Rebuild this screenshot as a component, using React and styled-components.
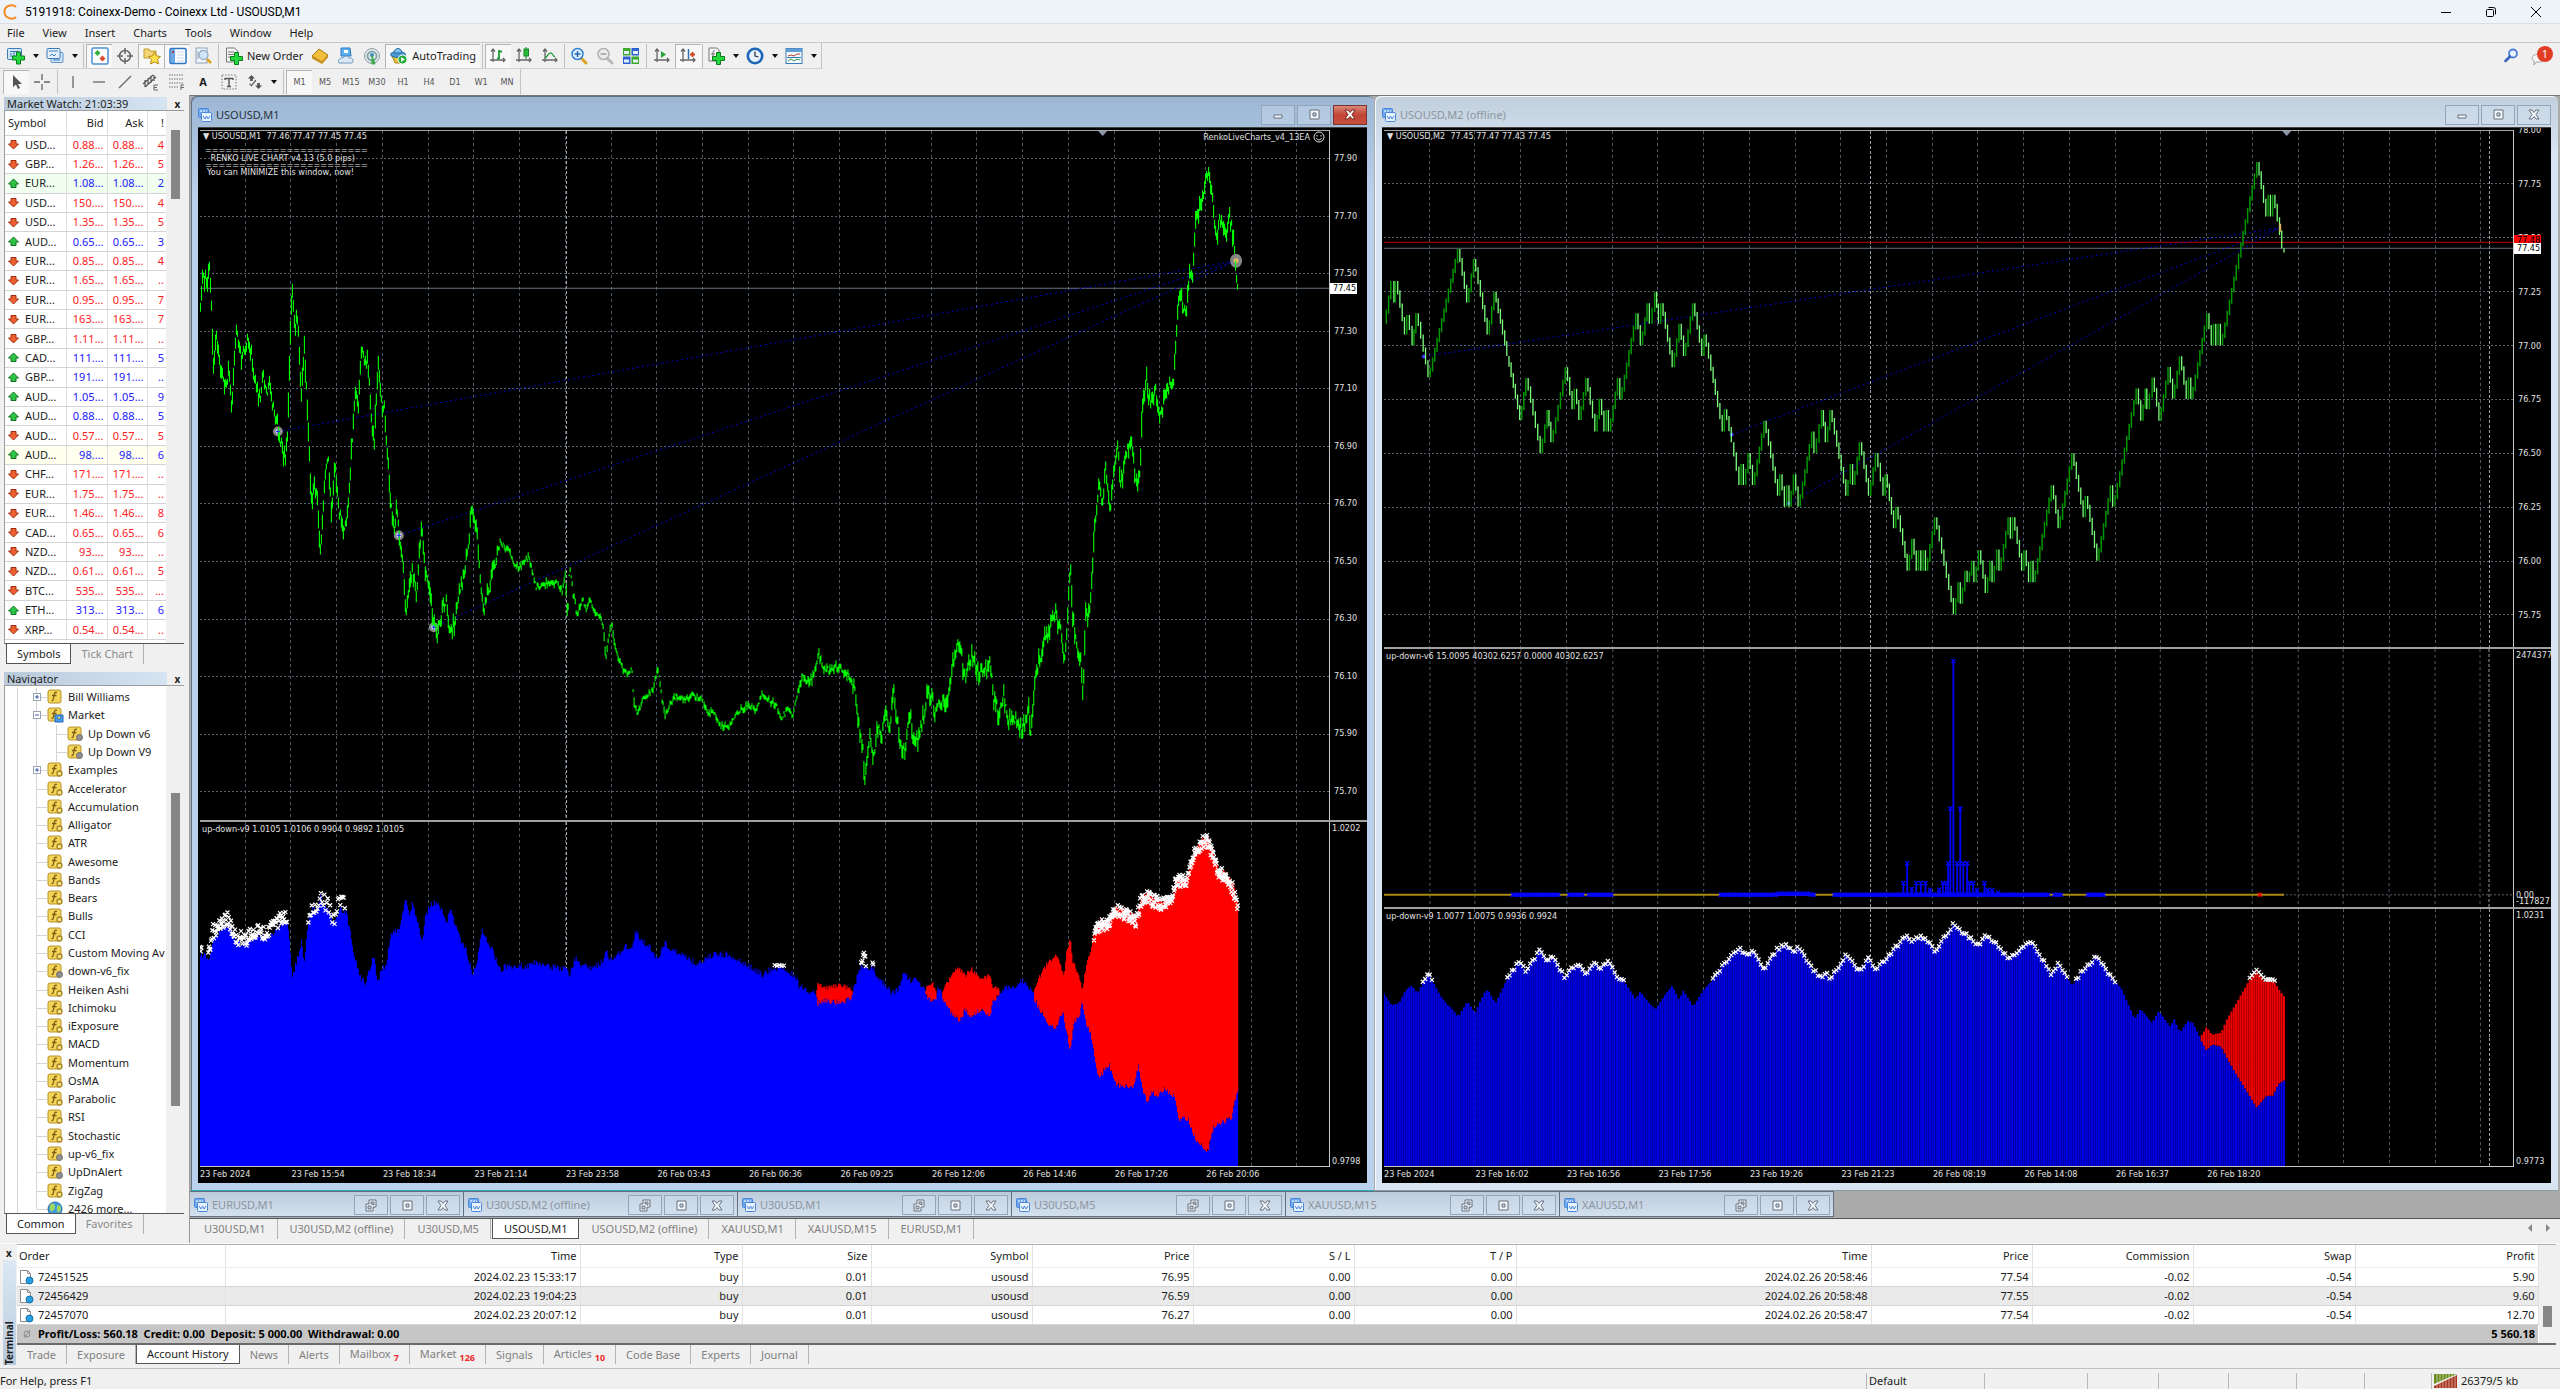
import React from "react";
import styled, { createGlobalStyle, css } from "styled-components";

const UI = `"Noto Sans", "Open Sans", sans-serif`;
const SMALL = `"DejaVu Sans Condensed", "DejaVu Sans", sans-serif`;

const Global = createGlobalStyle`
  *, *::before, *::after { box-sizing: border-box; }
  html, body { margin: 0; padding: 0; background: #f0f0f0; }
  body { font: 11px/14px ${UI}; color: #1c1c1c; overflow: hidden; }
  button { font: inherit; color: inherit; background: none; border: 0; padding: 0; margin: 0; border-radius: 0; }
  ul { list-style: none; margin: 0; padding: 0; }
  table { border-collapse: collapse; }
  svg { display: block; flex: none; }
`;

/* ---------- shell ---------- */

const Shell = styled.div`
  display: flex;
  flex-direction: column;
  height: 100vh;
  background: #f0f0f0;
`;

const TitleBar = styled.header`
  display: flex;
  align-items: center;
  height: 23px;
  padding: 0 18px 0 3px;
  background: #eef3f9;
  color: #000;
  flex: none;
`;

const AppTitle = styled.h1`
  flex: 1;
  margin: 0 0 0 8px;
  font: 400 12px/14px Roboto, ${UI};
`;

const Caption = styled.div`
  display: flex;
  gap: 33px;
`;

const CaptionButton = styled.button`
  width: 12px;
  height: 14px;
  display: grid;
  place-items: center;
`;

const MenuBar = styled.nav`
  display: flex;
  align-items: center;
  height: 20px;
  padding-bottom: 1px;
  border-top: 1px solid #dcdfe2;
  border-bottom: 1px solid #c8c8c8;
  flex: none;
`;

const MenuItem = styled.button`
  padding: 0 11px 0 7px;
`;

const ToolArea = styled.div`
  display: flex;
  align-items: center;
  height: 52px;
  flex: none;
`;

const ToolRows = styled.div`
  flex: 1;
  display: flex;
  flex-direction: column;
  align-items: flex-start;
`;

const Bar = styled.div`
  display: flex;
  align-items: center;
  height: 26px;
  padding-left: 3px;
  border-right: 1px solid #c4c4c4;
  border-bottom: 1px solid ${(p) => (p.$line ? "#d2d2d2" : "transparent")};
`;

const Tool = styled.button`
  display: flex;
  align-items: center;
  justify-content: center;
  gap: 4px;
  min-width: 26px;
  height: 24px;
  padding: 0 ${(p) => (p.$text ? "4px" : "0")};
  font: ${(p) => (p.$small ? `9px/12px ${SMALL}` : "inherit")};
  color: ${(p) => (p.$small ? "#555" : "#1c1c1c")};
  ${(p) =>
    p.$on &&
    css`
      background: #f8f8f8;
      border-top: 1px solid #b4b4b4;
      border-left: 1px solid #b4b4b4;
    `}
`;

const DropTool = styled(Tool)`
  width: 39px;
  gap: 8px;
  &::after {
    content: "";
    border: 3px solid transparent;
    border-top: 4px solid #111;
    border-bottom: 0;
  }
`;

const Sep = styled.span`
  width: 1px;
  height: 24px;
  margin: 0 ${(p) => (p.$wide ? "2px" : "1px")};
  background: #c0c0c0;
`;

const Alerts = styled.div`
  display: flex;
  align-items: center;
  gap: 6px;
  padding: 0 6px 26px 0;
`;

const Work = styled.main`
  display: flex;
  flex: 1;
  min-height: 0;
`;

/* ---------- side panels ---------- */

const Side = styled.aside`
  display: flex;
  flex-direction: column;
  width: 190px;
  flex: none;
  padding: 2px 5px 0 4px;
  border-right: 1px solid #9a9a9a;
`;

const PanelHead = styled.div`
  display: flex;
  align-items: center;
  justify-content: space-between;
  height: 13px;
  padding-right: 2px;
  background: linear-gradient(90deg, #b9cadb, #d6e4f2 163px, #f0f0f0 163px);
  flex: none;
`;

const PanelTitle = styled.h2`
  margin: 0;
  padding-left: 3px;
  font-size: 11px;
  line-height: 13px;
  font-weight: 400;
`;

const CloseX = styled.button`
  width: 9px;
  height: 11px;
  font: bold 10px/10px ${UI};
`;

const PanelBody = styled.div`
  display: flex;
  min-height: 0;
  flex: ${(p) => (p.$grow ? "1" : "none")};
  border-top: 1px solid #9c9c9c;
  border-left: 1px solid #9c9c9c;
  border-bottom: 1px solid #555;
`;

const PanelContent = styled.div`
  flex: 1;
  min-width: 0;
  padding-bottom: ${(p) => (p.$room ? "3px" : "0")};
  background: #fff;
  overflow: hidden;
`;

const Track = styled.div`
  width: 18px;
  flex: none;
  display: flex;
  justify-content: center;
  padding-top: ${(p) => p.$from}px;
  background: #f0f0f0;
`;

const Thumb = styled.div`
  width: 9px;
  height: ${(p) => p.$size}px;
  background: #868686;
`;

const QuoteTable = styled.table`
  width: 100%;
  height: 529px;
  table-layout: fixed;
  thead tr { height: 24px; }
  tbody tr { height: 19px; }
  th, td {
    padding: 0 3px 0 0;
    text-align: right;
    font-weight: 400;
    border-right: 1px solid #dedede;
    border-bottom: 1px solid #d4d4d4;
    white-space: nowrap;
    overflow: hidden;
  }
  th:first-child, td:first-child { text-align: left; padding-left: 3px; }
  th:last-child, td:last-child { border-right: 0; }
`;

const QuoteRow = styled.tr`
  background: ${(p) => p.$tint || "#fff"};
  td { color: ${(p) => (p.$up ? "#2020ff" : "#ff2020")}; }
  td:first-child { color: #1c1c1c; }
`;

const SymbolCell = styled.span`
  display: flex;
  align-items: center;
  gap: 6px;
`;

const PanelTabs = styled.div`
  display: flex;
  align-items: flex-start;
  height: ${(p) => p.$h}px;
  padding-left: 2px;
  flex: none;
`;

const PanelTab = styled.button`
  height: 20px;
  padding: 0 10px;
  color: #8a8a8a;
  border-right: 1px solid #b0b0b0;
  ${(p) =>
    p.$on &&
    css`
      background: #fff;
      color: #1c1c1c;
      border: 1px solid #555;
      border-top: 0;
    `}
`;

const Tree = styled.ul`
  display: grid;
  grid-auto-rows: minmax(0, 1fr);
  height: 532px;
  padding-top: 2px;
`;

const TreeRow = styled.li`
  display: flex;
  align-items: center;
  gap: 4px;
  line-height: 18px;
  white-space: nowrap;
`;

const TreeLead = styled.span`
  display: flex;
  align-items: center;
  flex: none;
`;

/* ---------- chart desktop ---------- */

const Desk = styled.section`
  display: flex;
  flex-direction: column;
  flex: 1;
  min-width: 0;
  border-top: 1px solid #777;
`;

const Mdi = styled.div`
  display: flex;
  flex-direction: column;
  flex: 1;
  min-height: 0;
  background: #ababab;
  border-bottom: 1px solid #555;
  padding-bottom: 1px;
`;

const Windows = styled.div`
  display: grid;
  grid-template-columns: 1fr 1fr;
  gap: 1px;
  flex: 1;
  min-height: 0;
  padding: 0 2px 0 1px;
`;

const Win = styled.article`
  display: flex;
  flex-direction: column;
  min-width: 0;
  min-height: 0;
  padding: 0 7px 7px;
  border-radius: 6px 6px 0 0;
  border-bottom: 1px solid ${(p) => (p.$active ? "#2ca7bd" : "#8c98a4")};
  box-shadow: inset 1px 1px 0 ${(p) => (p.$active ? "#5f7286" : "#f4f8fc")};
  background: ${(p) =>
    p.$active
      ? "linear-gradient(#9cb6d4, #b9d1ea 100px)"
      : "linear-gradient(#c1cfdd, #d8e4f1 60px)"};
`;

const WinHead = styled.header`
  display: flex;
  align-items: center;
  height: 31px;
  padding-top: 6px;
  gap: 4px;
  color: ${(p) => (p.$active ? "#2a333d" : "#8b95a0")};
  flex: none;
`;

const WinTitle = styled.h2`
  flex: 1;
  margin: 0;
  font-size: 11px;
  font-weight: 400;
  white-space: nowrap;
`;

const WinButtons = styled.div`
  display: flex;
  gap: 2px;
`;

const WinButton = styled.button`
  display: grid;
  place-items: center;
  width: 34px;
  height: 20px;
  border: 1px solid ${(p) => (p.$close ? "#7c3030" : "#93a5ba")};
  background: ${(p) =>
    p.$close ? "linear-gradient(#d98878, #c24435 50%, #c8503c)" : "rgba(210, 224, 240, 0.4)"};
`;

const Chart = styled.div`
  display: grid;
  grid-template-columns: minmax(0, 1fr) 37px;
  grid-template-rows: ${(p) => p.$rows};
  flex: 1;
  min-height: 0;
  padding: 2px 0 0 2px;
  overflow: hidden;
  background: #000;
  border-top: 1px solid #444;
  color: #e0e0e0;
  font: 9px/12px ${SMALL};
`;

const Plot = styled.div`
  position: relative;
  min-height: 0;
  border-right: 1px solid #c8c8c8;
  border-top: ${(p) => (p.$first ? "1px solid #a8a8a8" : "0")};
  border-bottom: ${(p) => (p.$last ? "1px solid #c8c8c8" : "0")};
`;

const Drawing = styled.svg`
  width: 100%;
  height: 100%;
  position: absolute;
  inset: 0;
`;

const Divider = styled.div`
  grid-column: 1 / -1;
  background: #a0a0a0;
`;

const Note = styled.div`
  position: absolute;
  top: -1px;
  left: 0;
  padding: ${(p) => p.$pad};
  white-space: pre;
`;

const Marker = styled.div`
  position: absolute;
  top: 0;
  right: 4px;
  display: flex;
  align-items: center;
  gap: 3px;
`;

const Axis = styled.div`
  position: relative;
  display: flex;
  flex-direction: column;
  justify-content: space-between;
  padding: ${(p) => p.$pad};
  margin-top: ${(p) => (p.$edge ? "-6px" : "0")};
  white-space: nowrap;
  min-height: 0;
`;

const Stacked = styled.span`
  line-height: 6px;
`;

const PriceTag = styled.div`
  position: absolute;
  left: 0;
  padding: 0 1px 0 3px;
  line-height: 11px;
  background: ${(p) => (p.$red ? "#f00" : "#fff")};
  color: #000;
`;

const TimeAxis = styled.div`
  display: grid;
  grid-template-columns: repeat(12, 91fr) 32fr;
  padding-top: 1px;
  white-space: nowrap;
`;

const MinRow = styled.div`
  display: flex;
  height: 26px;
  flex: none;
`;

const MinWin = styled.article`
  display: flex;
  align-items: center;
  width: 274px;
  gap: 4px;
  padding: 2px 3px 0 4px;
  color: #8b95a0;
  background: linear-gradient(#bccada, #d4e1ef);
  border: 1px solid #64707c;
  border-width: 1px 1px 1px 0;
`;

const ChartTabs = styled.nav`
  display: flex;
  gap: 1px;
  height: 24px;
  padding-left: 3px;
  flex: none;
`;

const ChartTab = styled.button`
  height: 20px;
  padding: 0 11px;
  color: #808080;
  border-right: 1px solid #b4b4b4;
  ${(p) =>
    p.$on &&
    css`
      background: #fff;
      color: #1c1c1c;
      border: 1px solid #555;
      border-top: 0;
    `}
`;

const TabScroll = styled.div`
  display: flex;
  gap: 12px;
  margin-left: auto;
  padding: 5px 9px 0 0;
`;

/* ---------- terminal ---------- */

const Terminal = styled.section`
  display: flex;
  height: 126px;
  flex: none;
  border-top: 1px solid #fafafa;
  border-bottom: 1px solid #c0c0c0;
`;

const Strip = styled.div`
  display: flex;
  flex-direction: column;
  align-items: center;
  width: 17px;
  gap: 2px;
  padding: 3px 0 3px 1px;
  flex: none;
`;

const StripLabel = styled.h2`
  flex: 1;
  margin: 0;
  width: 13px;
  writing-mode: vertical-rl;
  transform: rotate(180deg);
  font-size: 10px;
  line-height: 13px;
  font-weight: 700;
  background: linear-gradient(#b9cadb, #dce8f4);
`;

const TermMain = styled.div`
  flex: 1;
  min-width: 0;
  margin-right: 4px;
`;

const TermBody = styled.div`
  display: flex;
  height: 101px;
  border-top: 1px solid #b0b0b0;
  border-bottom: 2px solid #6a6a6a;
`;

const OrderTable = styled.table`
  flex: 1;
  width: 100%;
  height: 98px;
  table-layout: fixed;
  background: #fff;
  thead tr { height: 22px; }
  tbody tr, tfoot tr { height: 19px; }
  th, td {
    padding: 0 3px 0 2px;
    text-align: right;
    font-weight: 400;
    border-right: 1px solid #e2e2e2;
    white-space: nowrap;
  }
  th:first-child, td:first-child { text-align: left; }
  th { border-bottom: 1px solid #ececec; }
  tbody td { border-bottom: 1px solid #d4d4d4; }
  tbody tr:nth-child(even) { background: #eaeaea; }
  tfoot { background: #c6c6c6; }
  tfoot td { font-weight: 700; border-right: 0; color: #000; white-space: pre; }
`;

const OrderCell = styled.span`
  display: flex;
  align-items: center;
  gap: 4px;
`;

const TermTabs = styled.nav`
  display: flex;
`;

const TermTab = styled(ChartTab)`
  height: 19px;
  padding: 0 10px;
`;

const Count = styled.sub`
  margin-left: 3px;
  font-size: 9px;
  line-height: 9px;
  font-weight: 700;
  color: #f02828;
`;

const Status = styled.footer`
  display: grid;
  grid-template-columns: 1fr 118px 103px 71px 70px 68px 68px 67px 129px;
  height: 20px;
  padding-top: 4px;
  flex: none;
`;

const StatusCell = styled.div`
  display: flex;
  align-items: center;
  gap: 3px;
  padding: 0 ${(p) => (p.$plain ? "0" : "2px")};
  border-left: ${(p) => (p.$plain ? "0" : "1px")} solid #b8b8b8;
`;

/* ---------- icons ---------- */

const Ico = ({ s = 18, children }) => (
  <svg width={s} height={s} viewBox="0 0 18 18" aria-hidden="true">
    {children}
  </svg>
);

const Plus = ({ x = 6, y = 5 }) => (
  <path
    transform={`translate(${x} ${y})`}
    d="M4 0h4v4h4v4H8v4H4V8H0V4h4z"
    fill="#22d83c"
    stroke="#0a7a1c"
    strokeWidth="1"
  />
);

const Glass = ({ c, sign }) => (
  <Ico>
    <path d="M11 11l5 5" stroke={c === "blue" ? "#d9a520" : "#b8b8b8"} strokeWidth="3" strokeLinecap="round" />
    <circle cx="7.5" cy="7" r="5.5" fill={c === "blue" ? "#dff0ff" : "#ececec"} stroke={c === "blue" ? "#2f7fd0" : "#b0b0b0"} strokeWidth="1.5" />
    <path d={sign} stroke={c === "blue" ? "#2464b0" : "#a0a0a0"} strokeWidth="1.5" />
  </Ico>
);

const axes = <path d="M4 2v13M1 13h15M2 4.5L4 2l2 2.500M14 11l2 2-2 2" stroke="#666" strokeWidth="1.3" fill="none" />;

const ICONS = {
  newChart: (
    <Ico>
      <rect x="0.5" y="1.5" width="14" height="11" rx="1" fill="#cfe4f8" stroke="#3d7ab8" />
      <path d="M3 4.500h9M4 6v4M7 5v4" stroke="#3d7ab8" />
      <Plus x={5.5} y={5} />
    </Ico>
  ),
  profiles: (
    <Ico>
      <rect x="5" y="5.5" width="12" height="10" rx="1" fill="#cfe4f8" stroke="#5f93c8" />
      <rect x="1" y="1.5" width="13" height="10" rx="1" fill="#e4f1fd" stroke="#3d7ab8" />
      <path d="M3 4h9M4 9l2-2 2 2 2-2M7 13h7" stroke="#3d7ab8" fill="none" />
    </Ico>
  ),
  market: (
    <Ico>
      <rect x="1" y="1" width="16" height="16" rx="1.5" fill="#fff" stroke="#4b8fd4" strokeWidth="1.5" />
      <path d="M6.500 3l3 3-3 3-3-3z" fill="#2fae3c" />
      <path d="M11.500 8.500l3 3-3 3-3-3z" fill="#e04a2c" />
    </Ico>
  ),
  target: (
    <Ico>
      <circle cx="9" cy="9" r="5.5" fill="none" stroke="#666" strokeWidth="1.5" />
      <path d="M9 1v6M9 11v6M1 9h6M11 9h6" stroke="#666" strokeWidth="1.5" />
    </Ico>
  ),
  favorites: (
    <Ico>
      <path d="M1 2h5l1 2h6v7H1z" fill="#f3d676" stroke="#c29a30" />
      <path d="M11.500 5l2 4 4 .5-3 3 1 4.500-4-2-4 2 1-4.500-3-3 4-.5z" fill="#ffdf4a" stroke="#b88a18" />
    </Ico>
  ),
  data: (
    <Ico>
      <rect x="1" y="1.5" width="16" height="15" rx="1.5" fill="#fff" stroke="#2f74c0" strokeWidth="1.5" />
      <rect x="2" y="2" width="4" height="14" fill="#6aa8e8" />
      <path d="M8 5h7M8 8h7M8 11h7M8 14h7" stroke="#c8d8e8" />
      <path d="M3 5h2" stroke="#c02020" strokeWidth="1.5" />
    </Ico>
  ),
  tester: (
    <Ico>
      <rect x="2" y="1" width="11" height="15" fill="#eef4fa" stroke="#8ca0b4" />
      <path d="M4 4v8M7 3v6M10 4v7" stroke="#8ca0b4" />
      <circle cx="9.5" cy="8" r="4.5" fill="#cfe6fa" stroke="#7f97b0" />
      <path d="M13 12l4 4" stroke="#d9a520" strokeWidth="2.5" />
    </Ico>
  ),
  order: (
    <Ico>
      <path d="M1.500 1h8l3 3v11h-11z" fill="#f6f6f6" stroke="#777" />
      <path d="M3 5h6M3 7.500h6M3 10h4" stroke="#777" />
      <Plus x={5.5} y={5.5} />
    </Ico>
  ),
  book: (
    <Ico>
      <path d="M1 9l7-7 9 6-6 7z" fill="#f0bf3c" stroke="#a87812" />
      <path d="M1 9l10 5.500 6-6v2l-6 6.500-10-5.500z" fill="#c8901c" />
    </Ico>
  ),
  signal: (
    <Ico>
      <path d="M4 1h9l1 8H4z" fill="#5fb0ee" stroke="#2a78c0" />
      <path d="M7 3h4v3H7z" fill="#fff" />
      <path d="M2 16c-2-3 2-6 4-5 2-3 6-2 6 0 4-1 5 3 3 5z" fill="#dceaf6" stroke="#6f96bc" />
    </Ico>
  ),
  radio: (
    <Ico>
      <circle cx="9" cy="9" r="7.5" fill="#dfe6e4" stroke="#8fa4a8" />
      <circle cx="9" cy="9" r="4.5" fill="none" stroke="#6f9ca8" strokeWidth="1.5" />
      <circle cx="9" cy="8" r="2" fill="#3f8fb8" />
      <path d="M9 9v8h3z" fill="#3cab48" stroke="#3cab48" />
    </Ico>
  ),
  auto: (
    <Ico>
      <path d="M2 9h12l-3 7H5z" fill="#e8c23c" stroke="#a8861c" />
      <ellipse cx="8" cy="7.5" rx="7.5" ry="3" fill="#4c9bd8" stroke="#2468a0" />
      <path d="M4 6c0-6 8-6 8 0z" fill="#7cc0ee" stroke="#2468a0" />
      <circle cx="12.5" cy="12.5" r="4.5" fill="#1fae34" stroke="#fff" />
      <path d="M11 10l4 2.500-4 2.500z" fill="#fff" />
    </Ico>
  ),
  bars: <Ico>{axes}<path d="M10 3v9M8 11.500h2M10 4.500h3" stroke="#1d9a34" strokeWidth="1.8" /></Ico>,
  candle: <Ico>{axes}<path d="M11 0v12" stroke="#158428" /><rect x="9" y="2" width="4.5" height="7" fill="#27bb3c" stroke="#158428" /></Ico>,
  line: <Ico>{axes}<path d="M4 11c3-1 3-6 6-5 2 1 2 3 4 4" fill="none" stroke="#1d9a34" strokeWidth="1.3" /></Ico>,
  zoomIn: <Glass c="blue" sign="M4.500 7h6M7.500 4v6" />,
  zoomOut: <Glass c="gray" sign="M4.500 7h6" />,
  tile: (
    <Ico>
      <rect x="1" y="1" width="7.5" height="7.5" fill="#3ca82c" />
      <rect x="9.5" y="1" width="7.5" height="7.5" fill="#2c5fd0" />
      <rect x="1" y="9.5" width="7.5" height="7.5" fill="#2c5fd0" />
      <rect x="9.5" y="9.5" width="7.5" height="7.5" fill="#3ca82c" />
      <path d="M2 4h5v3h-5zM11 4h5v3h-5zM2 12.500h5v3h-5zM11 12.500h5v3h-5z" fill="#e4f0fa" />
    </Ico>
  ),
  scroll: <Ico>{axes}<path d="M8 4l5 3.500-5 3.500z" fill="#27a53c" /></Ico>,
  shift: <Ico>{axes}<path d="M9.500 2v10" stroke="#2c6fb0" strokeWidth="1.5" /><path d="M16 7.500h-5M13.500 5v5" stroke="#d0401c" strokeWidth="1.8" /></Ico>,
  indicators: (
    <Ico>
      <path d="M2 1h8l2 2v11H2z" fill="#f6f6f6" stroke="#777" />
      <path d="M8 4c-2-1-2 1-2 3v4M4 7h4" stroke="#666" fill="none" />
      <Plus x={5.5} y={5.5} />
    </Ico>
  ),
  clock: (
    <Ico>
      <circle cx="9" cy="9" r="7.2" fill="#e6f3fe" stroke="#1f66b8" strokeWidth="2.6" />
      <path d="M9 4.500V9l3.500 1" stroke="#333" strokeWidth="1.3" fill="none" />
    </Ico>
  ),
  template: (
    <Ico>
      <rect x="1" y="1.5" width="16" height="15" fill="#f6fafe" stroke="#3d7ab8" />
      <rect x="1" y="1.5" width="16" height="3.5" fill="#5f9cd8" />
      <path d="M3 9l3-1 3 1 3-2 3 0" stroke="#b04030" fill="none" />
      <path d="M3 14l3-2 3 2 3-2 3 1" stroke="#2fa040" fill="none" />
      <path d="M2 10.500h14" stroke="#3d7ab8" />
    </Ico>
  ),
  cursor: <Ico><path d="M5 2v12l3-2.500 2 4.500 2-1-2-4h4z" fill="#555" /></Ico>,
  cross: <Ico><path d="M9 1v6M9 11v6M1 9h6M11 9h6" stroke="#666" strokeWidth="1.3" /></Ico>,
  vline: <Ico><path d="M9 3v12" stroke="#666" strokeWidth="1.3" /></Ico>,
  hline: <Ico><path d="M3 9h12" stroke="#666" strokeWidth="1.3" /></Ico>,
  trend: <Ico><path d="M3 15L15 3" stroke="#666" strokeWidth="1.3" /></Ico>,
  channel: (
    <Ico>
      <path d="M1 11L11 2M3 14L14 4M3 7v7M6 5v7M9 3v7M12 2v6" stroke="#555" strokeWidth="1.2" />
      <path d="M16 12h-4v5h4M12 14.500h3" stroke="#666" fill="none" />
    </Ico>
  ),
  fibo: (
    <Ico>
      <path d="M1 2h15M1 6h15M1 10h15M1 14h9" stroke="#777" strokeDasharray="1.5 1" />
      <path d="M16 12h-3v5M13 14.500h3" stroke="#666" fill="none" />
    </Ico>
  ),
  label: (
    <Ico>
      <rect x="2" y="2" width="14" height="14" fill="none" stroke="#777" strokeDasharray="1.5 1.5" />
      <path d="M5 5.500h8M9 5.500v8M5 5v2M13 5v2M7 13.500h4" stroke="#555" strokeWidth="1.4" />
    </Ico>
  ),
  arrows: (
    <Ico s={16}>
      <path d="M5 1l4 4H6.500v3h-3V5H1z" fill="#555" />
      <path d="M13 17l-4-4h2.500v-3h3v3H17z" fill="#555" />
      <path d="M3 11l2 2 5-6" stroke="#555" fill="none" strokeWidth="1.3" />
    </Ico>
  ),
};

const Arrow = ({ up }) => (
  <svg width="11" height="11" viewBox="0 0 11 11" aria-hidden="true">
    <path
      d={up ? "M5.500 1l5 5H8v3.500H3V6H0.500z" : "M5.500 10l5-5H8V1.500H3V5H0.500z"}
      fill={up ? "#2cc444" : "#ee6030"}
      stroke={up ? "#127020" : "#a02c10"}
    />
  </svg>
);

const ChartIcon = () => (
  <svg width="14" height="14" viewBox="0 0 14 14" aria-hidden="true">
    <rect x="0.5" y="0.5" width="10" height="9" rx="1" fill="#6fa8ee" stroke="#4a86d8" />
    <rect x="3.5" y="4.5" width="10" height="9" rx="1" fill="#e8f2fd" stroke="#4a86d8" />
    <path d="M2 3h7" stroke="#fff" strokeDasharray="2 1" />
    <path d="M5 8l2 3 1.500-3 1.500 3 2-3" fill="none" stroke="#4a86d8" />
  </svg>
);

const glyphs = {
  min: "M3 7h8v3H3z",
  max: "M3 2h9v9H3zM6 5v3h3V5z",
  restore: "M5 1h7v7h-3v4H2V5h3zM4 7v3h3V7zM7 3v2h2v1h1V3z",
  close: "M2 2h3l2 2.500L9 2h3L9 6.500 12 11H9L7 8.500 5 11H2l3-4.500z",
};

const Glyph = ({ kind, light }) => (
  <svg width="14" height="13" viewBox="0 0 14 13" aria-hidden="true">
    <path d={glyphs[kind]} fillRule="evenodd" fill={light ? "#fff" : "#f4f7fa"} stroke={light ? "#74241c" : "#66717e"} />
  </svg>
);

/* ---------- chart data ---------- */

// Horizontal samples are in chart units; one grid cell is 60.25 units and 45.725 px wide.
const UNIT = 1130 / 1489;
const noise = (i) => {
  const v = Math.sin(i * 127.1 + 11.7) * 43758.5453;
  return v - Math.floor(v);
};
const pairs = (text) => text.trim().split(/\s+/).map((t) => t.split(",").map(Number));
const sample = (pts, x) => {
  if (x <= pts[0][0]) return pts[0][1];
  for (let i = 1; i < pts.length; i++) {
    if (x <= pts[i][0]) {
      const [x0, y0] = pts[i - 1];
      const [x1, y1] = pts[i];
      return y0 + ((y1 - y0) * (x - x0)) / (x1 - x0 || 1);
    }
  }
  return pts[pts.length - 1][1];
};

const M1_PRICE = pairs(`13,430 16,375 23,380 25,330 27,430 30,570 34,490 38,550 43,590 48,610 50,560 54,650 60,490 68,555 73,500
80,540 90,645 95,575 100,610 104,600 108,640 116,700 120,730 125,760 128,700 131,490 134,395 138,480 140,440 146,620 150,525 155,700 159,850
163,810 167,835 171,965 175,850 181,740 186,890 190,765 196,870 202,915 208,860 212,740 217,610 221,640 225,535 230,560 234,550
238,680 242,725 247,550 252,650 255,640 260,760 264,850 269,915 272,850 275,920 280,990 284,1080 288,1020 292,995 297,1050
301,975 305,895 310,1010 315,1030 320,1110 326,1135 330,1100 337,1045 342,1130 346,1120 352,1060 358,1025 365,960 371,850 377,900
381,990 386,1090 392,1040 400,990 409,930 414,950 419,945 427,985 433,990 440,975 446,965 455,1028 465,1025 475,1020 485,1025
490,1040 494,1000 497,1100 500,980 504,1040 510,1090 516,1060 522,1075 526,1058 532,1080 538,1092 544,1110 547,1185 552,1130
555,1105 560,1160 570,1205 576,1215 582,1205 585,1285 590,1300 597,1265 604,1255 610,1245 616,1202 621,1260 626,1305 632,1280
641,1260 650,1270 658,1265 665,1260 676,1270 682,1305 689,1290 695,1318 703,1325 709,1330 716,1305 725,1290 737,1280 745,1293
753,1258 762,1270 772,1280 780,1312 787,1285 794,1300 800,1260 807,1220 815,1235 822,1215 828,1172 834,1200 842,1210 850,1198
858,1200 866,1215 872,1230 877,1260 882,1340 886,1370 889,1440 892,1390 896,1350 901,1395 906,1320 911,1340 918,1295 922,1330
927,1255 930,1290 937,1365 942,1380 948,1290 952,1350 960,1355 966,1310 972,1245 977,1260 983,1300 990,1270 996,1280 1003,1215
1010,1160 1016,1160 1020,1225 1026,1200 1031,1170 1038,1215 1046,1205 1055,1195 1058,1265 1066,1300 1072,1260 1078,1305
1087,1310 1096,1340 1105,1290 1108,1335 1112,1260 1118,1190 1127,1135 1133,1120 1140,1080 1147,1120 1152,1190 1156,1110 1160,990
1163,1090 1168,1150 1174,1190 1177,1270 1180,1070 1184,1095 1188,1030 1192,900 1199,800 1202,850 1207,780 1212,870 1217,800
1222,720 1227,815 1232,760 1240,715 1246,800 1251,810 1255,660 1261,590 1266,650 1272,615 1278,660 1284,630 1290,605 1296,590
1300,490 1304,405 1309,435 1313,445 1318,355 1321,370 1325,260 1331,230 1338,180 1341,160 1346,170 1350,260 1354,285 1358,245
1363,285 1370,245 1374,280 1378,340 1381,400`);

const priceBars = () => {
  let d = "";
  let prev = null;
  for (let px = 0; px <= 1038; px += 1) {
    const zx = 13 + px / UNIT;
    const quiet = zx > 405 && zx < 800;
    const amp = quiet ? 6 : zx >= 800 && zx < 870 ? 9 : 16;
    const y = (sample(M1_PRICE, zx) * 740) / 1568 - 30;
    const mid = y + (noise(px + 300) - 0.5) * amp * 0.9;
    let a = mid - noise(px) * amp * 0.5;
    let b = mid + noise(px + 5000) * amp * 0.5;
    if (prev !== null && !(quiet && noise(px + 900) > 0.6)) {
      a = Math.min(a, (prev + mid) / 2);
      b = Math.max(b, (prev + mid) / 2);
    }
    prev = mid;
    d += `M${px + 0.5} ${Math.round(a)}V${Math.round(b + 1)}`;
  }
  return d;
};

const M1_TOP = pairs(`13,462 20,470 25,478 30,410 38,395 50,370 55,400 62,430 75,432 85,410 92,415 100,415 110,400 120,372 128,365 131,430
134,540 138,500 143,460 146,420 150,485 155,370 160,330 167,330 172,285 177,320 185,350 190,370 196,330 205,335 210,390 217,480
224,530 230,555 236,510 242,470 247,550 252,510 258,500 263,420 268,390 274,400 279,340 284,298 288,350 293,310 299,360 305,430
310,350 317,310 325,308 332,330 337,370 343,325 350,380 357,430 365,460 372,530 378,480 385,388 391,420 400,460 409,515 415,500
425,500 433,495 442,505 455,485 470,500 485,505 496,505 500,530 508,470 516,500 530,505 545,485 547,445 553,480 565,460 575,440
582,440 587,395 595,425 605,440 616,485 626,430 635,450 650,468 665,490 680,480 690,465 710,465 720,480 740,505 755,525 765,510
780,505 790,520 797,530 803,560 812,575 825,580 827,603 835,592 845,597 858,600 870,590 873,580 878,540 884,505 900,500 905,530
917,560 925,580 932,575 940,520 950,545 960,540 968,570 971,585 978,598 983,585 986,570 992,585 1003,630 1015,655 1022,620
1030,645 1040,625 1055,635 1058,595 1066,583 1072,565 1085,560 1098,545 1108,570 1112,583 1120,620 1130,660 1141,680 1150,625
1155,680 1160,740 1165,660 1172,640 1176,590 1182,670 1188,700 1192,760 1198,830 1205,800 1212,790 1222,850 1232,850 1243,850
1250,790 1257,870 1262,900 1268,870 1275,880 1285,860 1297,880 1304,950 1316,950 1325,1010 1341,1050 1350,970 1358,960
1372,950 1378,890 1382,850`);

const M1_RED = pairs(`825,583 827,560 835,572 845,570 858,565 870,575 873,583 968,583 971,572 978,558 983,575 986,583 992,583 1003,540
1012,510 1022,535 1030,515 1040,545 1055,535 1058,570 1066,580 1112,583 1120,540 1130,500 1141,475 1147,500 1152,540 1155,470
1160,425 1163,490 1170,530 1176,578 1182,500 1188,460 1192,400 1200,370 1210,370 1220,330 1235,340 1248,360 1254,300 1262,290
1280,310 1295,300 1300,240 1315,240 1322,170 1335,125 1341,115 1347,150 1355,210 1365,230 1375,260 1382,320`);

const subY = (zy) => zy / 3 - 22;

const m1Blue = () => {
  let d = "M0 345";
  for (let px = 0; px <= 1038; px += 1) {
    const y = subY(sample(M1_TOP, 13 + px / UNIT)) + (noise(px + 77) - 0.5) * 7;
    d += `L${px} ${y.toFixed(1)}H${px + 1}`;
  }
  return d + "V345Z";
};

const m1Red = () => {
  let d = "";
  for (let px = 616; px <= 1038; px += 1) {
    const zx = 13 + px / UNIT;
    const a = subY(sample(M1_RED, zx)) - noise(px) * 5;
    const b = subY(sample(M1_TOP, zx)) + noise(px + 9) * 6;
    const red = (zx > 825 && zx < 873) || (zx > 969 && zx < 984) || (zx > 992 && zx < 1067) || zx > 1112;
    if (red && b > a) d += `M${px + 0.5} ${a.toFixed(1)}V${b.toFixed(1)}`;
  }
  return d;
};

const mark = (x, y, r = 2) =>
  `M${(x - r).toFixed(1)} ${(y - r).toFixed(1)}l${2 * r} ${2 * r}m0 ${-2 * r}l${-2 * r} ${2 * r}`;

const m1Marks = () => {
  let d = "";
  const run = (from, to, pts, up, spread, step = 0.9) => {
    for (let zx = from; zx <= to; zx += step) {
      const y = subY(sample(pts, zx)) - up + (noise(zx * 3) - 0.5) * spread;
      d += mark((zx - 13) * UNIT, y);
    }
  };
  run(13, 15, M1_TOP, 5, 8);
  run(24, 128, M1_TOP, 5, 15);
  run(156, 204, M1_TOP, 5, 18, 1.5);
  run(771, 784, M1_TOP, 3, 2, 3);
  run(885, 892, M1_TOP, 8, 14);
  run(900, 901, M1_TOP, 3, 2);
  run(1192, 1382, M1_RED, -1, 13, 0.7);
  return d;
};

const M2_PIVOTS = pairs(`18,625 27,505 31,565 33,505 45,655 48,600 55,685 60,595 76,775 115,415 127,565 136,443 154,655 163,535 180,715
197,895 205,777 224,987 233,867 238,957 257,747 266,865 269,807 275,895 284,777 296,927 302,835 308,927 311,867 314,927 326,777
329,837 350,595 356,685 365,567 368,625 375,535 380,625 383,567 398,747 407,625 413,715 425,567 437,715 440,655 464,927 467,865
476,957 486,1077 489,1018 492,1077 498,987 504,1077 519,897 537,1107 540,1047 546,1138 549,1078 552,1138 558,1047 564,1138
582,927 585,987 595,867 600,957 606,867 627,1107 633,1018 636,1077 645,957 657,1107 666,987 676,1107 679,1047 690,1198 693,1138
708,1318 714,1228 720,1318 723,1260 726,1318 729,1260 732,1318 744,1168 769,1440 775,1350 778,1410 784,1318 787,1350 793,1290
796,1350 802,1260 811,1380 817,1290 820,1350 826,1258 829,1318 841,1168 844,1228 847,1168 859,1318 862,1260 868,1350 871,1290
874,1350 898,1078 907,1198 925,988 940,1168 943,1108 958,1290 976,1078 979,1138 1010,806 1016,897 1022,806 1024,865 1031,776
1040,897 1052,746 1058,835 1067,716 1076,836 1079,776 1082,836 1103,595 1109,685 1112,625 1115,685 1118,625 1121,685 1169,171
1181,324 1184,263 1187,324 1190,263 1202,413 1205,425`);

const renko = () => {
  let up = "";
  let down = "";
  const toY = (zy) => zy / 2.8 - 30;
  for (let i = 1; i < M2_PIVOTS.length; i++) {
    const [x0, y0] = M2_PIVOTS[i - 1];
    const [x1, y1] = M2_PIVOTS[i];
    const n = Math.max(1, Math.round((x1 - x0) / 3.0125));
    for (let k = 1; k <= n; k++) {
      const ya = y0 + ((y1 - y0) * (k - 1)) / n;
      const yb = y0 + ((y1 - y0) * k) / n;
      const x = ((x0 + ((x1 - x0) * k) / n - 18) * UNIT).toFixed(1);
      const rising = y1 < y0;
      const top = Math.min(ya, yb) - (rising ? 0 : k > 1 ? 12 : 0);
      const bottom = Math.max(ya, yb) + (rising && k > 1 ? 12 : 0);
      const piece = `M${x} ${toY(top).toFixed(1)}V${toY(bottom).toFixed(1)}`;
      if (rising) up += piece;
      else down += piece;
    }
  }
  return { up, down };
};

const M2_TOP = pairs(`18,945 28,975 38,970 47,935 55,925 62,945 70,915 76,895 84,920 92,950 100,970 108,985 116,1005 128,965 138,995
150,945 155,935 165,970 180,910 196,862 205,890 224,835 233,865 240,850 257,905 266,880 275,870 284,895 296,862 302,880 314,865
326,905 332,905 350,960 356,940 368,970 376,985 390,945 398,925 407,960 413,938 426,978 440,935 452,910 464,875 486,830 498,850
504,835 519,882 537,832 549,820 558,840 564,825 582,880 594,905 600,890 606,910 627,848 645,888 657,855 667,885 690,835 708,795
714,812 726,800 735,810 744,840 769,770 785,795 802,825 811,797 828,825 843,860 860,825 872,815 898,895 907,870 926,925 940,885
958,850 980,910 990,930 1008,1010 1016,985 1031,1020 1040,990 1055,1030 1060,1010 1068,1045 1078,1015 1085,1020 1095,1060
1097,1070 1103,1090 1110,1075 1122,1080 1130,1110 1145,1160 1158,1200 1169,1235 1182,1205 1190,1205 1198,1175 1206,1165`);

const M2_RED = pairs(`1097,1050 1103,1030 1110,1050 1122,1045 1130,1010 1145,960 1158,915 1169,890 1180,915 1192,915 1200,940 1206,955`);

const v9Y = (zy) => (zy * 620) / 1568 - 289;

const m2Sub = () => {
  let blue = "";
  let red = "";
  let marks = "";
  const marked = [[69, 84], [178, 336], [450, 921], [930, 984]];
  for (let i = 0; i <= 394; i++) {
    const zx = 18 + i * 3.0125;
    const x = ((zx - 18) * UNIT).toFixed(1);
    const y = v9Y(sample(M2_TOP, zx));
    blue += `M${x} ${y.toFixed(1)}V258`;
    if (zx > 1095) red += `M${x} ${v9Y(sample(M2_RED, zx)).toFixed(1)}V${y.toFixed(1)}`;
    if (marked.some(([a, b]) => zx > a && zx < b)) marks += mark(Number(x), y + (noise(i) - 0.5) * 4);
    if (zx > 1157 && zx < 1195) marks += mark(Number(x), v9Y(sample(M2_RED, zx)) - 2);
  }
  return { blue, red, marks };
};

const V6_BARS = [[703, 665], [708, 615], [714, 680], [720, 665], [726, 665], [732, 665], [738, 682], [750, 682], [755, 665], [759, 665], [762, 615],
  [765, 477], [769, 104], [774, 615], [778, 477], [782, 615], [787, 615], [790, 665], [795, 665], [800, 683], [810, 665], [814, 683], [820, 683], [828, 690]];
const V6_RUNS = [[188, 248], [262, 280], [288, 318], [462, 585], [612, 895], [902, 912], [946, 968]];

const v6Y = (zy) => (zy * 620) / 1568 - 29;

const v6 = () => {
  let bars = "";
  let marks = "";
  V6_BARS.forEach(([zx, zy]) => {
    const x = (zx - 18) * UNIT;
    bars += `M${x.toFixed(1)} ${v6Y(zy).toFixed(1)}V${v6Y(695)}`;
    marks += mark(x, v6Y(zy));
  });
  V6_RUNS.forEach(([a, b]) => {
    for (let zx = a; zx <= b; zx += 3) marks += mark((zx - 18) * UNIT, v6Y(695) - (zx > 535 && zx < 580 ? 1 : 0));
  });
  return { bars, marks };
};

/* ---------- chart pieces ---------- */

const GridV = ({ h, strong = [] }) => {
  const lines = [];
  for (let k = 1; k <= 24; k++) lines.push(Math.round(k * 45.725));
  return (
    <g shapeRendering="crispEdges">
      {lines.map((x) => (
        <line key={x} x1={x} x2={x} y1="0" y2={h} stroke="#4f5963" strokeDasharray="3 3" />
      ))}
      {strong.map((x) => (
        <line key={`s${x}`} x1={x} x2={x} y1="0" y2={h} stroke="#98a0a8" strokeDasharray="3 2" />
      ))}
    </g>
  );
};

const GridH = ({ ys }) => (
  <g shapeRendering="crispEdges">
    {ys.map((y) => (
      <line key={y} x1="0" x2="1130" y1={y} y2={y} stroke="#56616b" strokeDasharray="2 2" />
    ))}
  </g>
);

const PlotSvg = ({ h, children }) => (
  <Drawing viewBox={`0 0 1130 ${h}`} preserveAspectRatio="none" aria-hidden="true">
    {children}
  </Drawing>
);

const range = (n, from, step) => Array.from({ length: n }, (_, i) => Math.round(from + i * step));

const M1_LABELS = ["77.90", "77.70", "77.50", "77.30", "77.10", "76.90", "76.70", "76.50", "76.30", "76.10", "75.90", "75.70"];
const M2_LABELS = ["78.00", "77.75", "77.50", "77.25", "77.00", "76.75", "76.50", "76.25", "76.00", "75.75"];
const M1_TIMES = ["23 Feb 2024", "23 Feb 15:54", "23 Feb 18:34", "23 Feb 21:14", "23 Feb 23:58", "26 Feb 03:43", "26 Feb 06:36", "26 Feb 09:25", "26 Feb 12:06", "26 Feb 14:46", "26 Feb 17:26", "26 Feb 20:06"];
const M2_TIMES = ["23 Feb 2024", "23 Feb 16:02", "23 Feb 16:56", "23 Feb 17:56", "23 Feb 19:26", "23 Feb 21:23", "26 Feb 08:19", "26 Feb 14:08", "26 Feb 16:37", "26 Feb 18:20"];

const Smile = () => (
  <svg width="12" height="12" viewBox="0 0 12 12" aria-hidden="true">
    <circle cx="6" cy="6" r="5" fill="none" stroke="#e0e0e0" />
    <path d="M4 4v1.500M8 4v1.500M3.500 7c1 2.500 4 2.500 5 0" fill="none" stroke="#e0e0e0" />
  </svg>
);

const TRADES = [[78, 301], [199, 405], [234, 497]];

const ChartM1 = () => (
  <Chart $rows="690fr 2px 345fr 16px">
    <Plot $first>
      <PlotSvg h={690}>
        <GridV h={690} strong={[367]} />
        <GridH ys={range(12, 28, 57.57)} />
        <path d="M0 157.500H1130" stroke="#67727e" />
        {TRADES.map(([x, y]) => (
          <path key={x} d={`M${x} ${y}L1037 130`} stroke="#0000c8" strokeDasharray="2 3" />
        ))}
        {[...TRADES, [1037, 130]].map(([x, y]) => (
          <g key={x}>
            <ellipse cx={x} cy={y} rx={x > 1000 ? 6 : 5} ry={x > 1000 ? 7 : 5} fill="#858585" />
            <circle cx={x} cy={y} r="2.5" fill={x > 1000 ? "#e0b868" : "#d8dcff"} />
          </g>
        ))}
        <path d={priceBars()} stroke="#00ff00" strokeWidth="1.1" />
        {TRADES.map(([x, y]) => (
          <path key={x} d={`M${x - 2} ${y}h4M${x} ${y - 2}v4`} stroke="#2828ff" />
        ))}
        <path d="M899 0h9l-4.500 5z" fill="#8896a6" />
      </PlotSvg>
      <Note $pad="0 0 0 3px">{"▼ USOUSD,M1  77.46 77.47 77.45 77.45"}</Note>
      <Note $pad="14px 0 0 5px">{"========================"}</Note>
      <Note $pad="22px 0 0 8px">{" RENKO LIVE CHART v4.13 (5.0 pips)"}</Note>
      <Note $pad="29px 0 0 5px">{"========================"}</Note>
      <Note $pad="36px 0 0 7px">You can MINIMIZE this window, now!</Note>
      <Marker>
        RenkoLiveCharts_v4_13EA <Smile />
      </Marker>
    </Plot>
    <Axis $pad="22px 0 23px 4px">
      {M1_LABELS.map((l) => <span key={l}>{l}</span>)}
      <PriceTag style={{ top: `${((77.9 - 77.45) * 287.9 + 23) / 6.9}%` }}>77.45</PriceTag>
    </Axis>
    <Divider />
    <Plot $last>
      <PlotSvg h={345}>
        <GridV h={345} strong={[367]} />
        <path d={m1Blue()} fill="#0000ff" />
        <path d={m1Red()} stroke="#ff0000" strokeWidth="1.3" />
        <path d={m1Marks()} stroke="#fff" strokeWidth="1.2" />
      </PlotSvg>
      <Note $pad="2px 0 0 2px">up-down-v9 1.0105 1.0106 0.9904 0.9892 1.0105</Note>
    </Plot>
    <Axis $pad="0 0 0 2px">
      <span>1.0202</span>
      <span>0.9798</span>
    </Axis>
    <TimeAxis>
      {M1_TIMES.map((t) => <span key={t}>{t}</span>)}
    </TimeAxis>
  </Chart>
);

const ChartM2 = () => {
  const bricks = renko();
  const spikes = v6();
  const sub = m2Sub();
  const strong = [487, 1106];
  return (
    <Chart $rows="517fr 2px 258fr 2px 258fr 16px">
      <Plot $first>
        <PlotSvg h={517}>
          <GridV h={517} strong={strong} />
          <GridH ys={range(9, 53, 53.93)} />
          <path d="M0 111.500H1130" stroke="#c00000" />
          <path d="M0 117.500H1130" stroke="#67727e" />
          {[[40, 226], [348, 304], [405, 373]].map(([x, y]) => (
            <g key={x}>
              <path d={`M${x} ${y}L897 97`} stroke="#0000c8" strokeDasharray="2 3" />
              <circle cx={x} cy={y} r="2" fill="#3c3cff" />
            </g>
          ))}
          <path d={bricks.up} stroke="#009600" strokeWidth="1.5" />
          <path d={bricks.down} stroke="#7dff7d" strokeWidth="1.3" />
          <path d="M897 93v8" stroke="#e0b060" strokeWidth="2" />
          <path d="M899 0h9l-4.500 5z" fill="#8896a6" />
        </PlotSvg>
        <Note $pad="0 0 0 3px">{"▼ USOUSD,M2  77.45 77.47 77.43 77.45"}</Note>
      </Plot>
      <Axis $edge $pad="0 0 26px 4px">
        {M2_LABELS.map((l) => <span key={l}>{l}</span>)}
        <PriceTag $red style={{ top: "21.3%" }}>77.48</PriceTag>
        <PriceTag style={{ top: "22.7%" }}>77.45</PriceTag>
      </Axis>
      <Divider />
      <Plot>
        <PlotSvg h={258}>
          <GridV h={258} strong={strong} />
          <path d={`M0 ${v6Y(695)}H901`} stroke="#a88a10" strokeWidth="2" />
          <path d={`M903 ${v6Y(695)}H1130`} stroke="#56616b" strokeDasharray="2 2" />
          <path d={spikes.bars} stroke="#0000ff" strokeWidth="1.8" />
          <path d={spikes.marks} stroke="#0000ff" strokeWidth="1.4" />
          <path d={mark((1173 - 18) * UNIT, v6Y(695))} stroke="#f00" strokeWidth="1.4" />
        </PlotSvg>
        <Note $pad="2px 0 0 2px">up-down-v6 15.0095 40302.6257 0.0000 40302.6257</Note>
      </Plot>
      <Axis $pad="0 0 3px 2px">
        <span>2474377</span>
        <Stacked>0.00<br />-117827</Stacked>
      </Axis>
      <Divider />
      <Plot $last>
        <PlotSvg h={258}>
          <GridV h={258} strong={strong} />
          <path d={sub.blue} stroke="#0000e6" strokeWidth="2" />
          <path d={sub.red} stroke="#f00000" strokeWidth="2" />
          <path d={sub.marks} stroke="#fff" strokeWidth="1.2" />
        </PlotSvg>
        <Note $pad="2px 0 0 2px">up-down-v9 1.0077 1.0075 0.9936 0.9924</Note>
      </Plot>
      <Axis $pad="0 0 0 2px">
        <span>1.0231</span>
        <span>0.9773</span>
      </Axis>
      <TimeAxis>
        {M2_TIMES.map((t) => <span key={t}>{t}</span>)}
      </TimeAxis>
    </Chart>
  );
};

/* ---------- content ---------- */

const QUOTES = `USD...|d|0.88...|0.88...|4
GBP...|d|1.26...|1.26...|5
EUR...|u|1.08...|1.08...|2|#f0fff0
USD...|d|150....|150....|4
USD...|d|1.35...|1.35...|5
AUD...|u|0.65...|0.65...|3
EUR...|d|0.85...|0.85...|4
EUR...|d|1.65...|1.65...|..
EUR...|d|0.95...|0.95...|7
EUR...|d|163....|163....|7
GBP...|d|1.11...|1.11...|..
CAD...|u|111....|111....|5
GBP...|u|191....|191....|..
AUD...|u|1.05...|1.05...|9
AUD...|u|0.88...|0.88...|5
AUD...|d|0.57...|0.57...|5
AUD...|u|98....|98....|6|#fffff0
CHF...|d|171....|171....|..
EUR...|d|1.75...|1.75...|..
EUR...|d|1.46...|1.46...|8
CAD...|d|0.65...|0.65...|6
NZD...|d|93....|93....|..
NZD...|d|0.61...|0.61...|5
BTC...|d|535...|535...|...
ETH...|u|313...|313...|6
XRP...|d|0.54...|0.54...|..`.split("\n").map((l) => l.split("|"));

const TREE = [
  ["Bill Williams", "plain", "+"], ["Market", "store", "-"], ["Up Down v6", "gray", "", true], ["Up Down V9", "gray", "", true],
  ["Examples", "gold", "+"], ["Accelerator", "gold"], ["Accumulation", "gold"], ["Alligator", "gold"], ["ATR", "gold"],
  ["Awesome", "gold"], ["Bands", "gold"], ["Bears", "gold"], ["Bulls", "gold"], ["CCI", "gold"], ["Custom Moving Av", "gold"],
  ["down-v6_fix", "gray"], ["Heiken Ashi", "gold"], ["Ichimoku", "gold"], ["iExposure", "gold"], ["MACD", "gold"],
  ["Momentum", "gold"], ["OsMA", "gold"], ["Parabolic", "gold"], ["RSI", "gold"], ["Stochastic", "gold"], ["up-v6_fix", "gray"],
  ["UpDnAlert", "gray"], ["ZigZag", "gold"], ["2426 more...", "globe"],
];

const Branch = ({ sign, deep, last }) => (
  <svg width={deep ? 62 : 42} height="18" viewBox={`0 0 ${deep ? 62 : 42} 18`} overflow="visible" aria-hidden="true">
    <path d={`M12.500 0v18.500M31.500 0v${last ? 9 : 18.5}`} stroke="#d4d4d4" />
    {deep ? <path d="M51.500 0v18.500M52 9.500h10" stroke="#d4d4d4" /> : <path d="M32 9.500h10" stroke="#d4d4d4" />}
    {sign && (
      <g>
        <rect x="28.5" y="5.5" width="7" height="7" fill="#fff" stroke="#9aa4b0" />
        <path d={sign === "+" ? "M30 9h4M32 7v4" : "M30 9h4"} stroke="#3c5ca8" />
      </g>
    )}
  </svg>
);

const TreeIcon = ({ kind }) => (
  <svg width="17" height="16" viewBox="0 0 17 16" aria-hidden="true">
    {kind === "globe" ? (
      <g>
        <circle cx="8" cy="8" r="7" fill="#3c9be0" stroke="#2468a0" />
        <path d="M3 4c3-3 5-1 5 2s-2 3-3 5c-2-1-3-4-2-7zM11 4c3 0 3 3 3 5l-3 3c-1-3-2-5 0-8z" fill="#9fd860" />
      </g>
    ) : (
      <g>
        <rect x="1" y="1" width="13" height="13" rx="2" fill="#f2d458" stroke="#b8922c" />
        <path d="M10 3.500c-2-1-2.500 0-3 3.500s-1 5-2.500 4.500M5 6.500h4.500" fill="none" stroke="#7c5c10" strokeWidth="1.3" />
        {kind === "gold" && <circle cx="12.5" cy="11.5" r="2.5" fill="#f7e28c" stroke="#a88420" strokeWidth="1.3" />}
        {kind === "gray" && <circle cx="12.5" cy="11.5" r="3" fill="#909090" stroke="#6c6c6c" />}
        {kind === "store" && <path d="M8 8h8v7H8zM10 10c0 3 4 3 4 0" fill="#4a9cec" stroke="#1f66b8" />}
      </g>
    )}
  </svg>
);

const WinControls = ({ kinds, active }) => (
  <WinButtons>
    {kinds.map((k) => (
      <WinButton key={k} $close={active && k === "close"} aria-label={k}>
        <Glyph kind={k} light={active && k === "close"} />
      </WinButton>
    ))}
  </WinButtons>
);

const ChartWindow = ({ title, active, children }) => (
  <Win $active={active}>
    <WinHead $active={active}>
      <ChartIcon />
      <WinTitle>{title}</WinTitle>
      <WinControls kinds={["min", "max", "close"]} active={active} />
    </WinHead>
    {children}
  </Win>
);

const MINIMIZED = ["EURUSD,M1", "U30USD,M2 (offline)", "U30USD,M1", "U30USD,M5", "XAUUSD,M15", "XAUUSD,M1"];
const CHART_TABS = ["U30USD,M1", "U30USD,M2 (offline)", "U30USD,M5", "USOUSD,M1", "USOUSD,M2 (offline)", "XAUUSD,M1", "XAUUSD,M15", "EURUSD,M1"];
const COLS = [["Order", 208], ["Time", 355], ["Type", 162], ["Size", 129], ["Symbol", 161], ["Price", 161], ["S / L", 161], ["T / P", 162], ["Time", 355], ["Price", 161], ["Commission", 161], ["Swap", 162], ["Profit", 183]];
const ORDERS = [
  ["72451525", "2024.02.23 15:33:17", "buy", "0.01", "usousd", "76.95", "0.00", "0.00", "2024.02.26 20:58:46", "77.54", "-0.02", "-0.54", "5.90"],
  ["72456429", "2024.02.23 19:04:23", "buy", "0.01", "usousd", "76.59", "0.00", "0.00", "2024.02.26 20:58:48", "77.55", "-0.02", "-0.54", "9.60"],
  ["72457070", "2024.02.23 20:07:12", "buy", "0.01", "usousd", "76.27", "0.00", "0.00", "2024.02.26 20:58:47", "77.54", "-0.02", "-0.54", "12.70"],
];
const TERM_TABS = [["Trade"], ["Exposure"], ["Account History"], ["News"], ["Alerts"], ["Mailbox", 7], ["Market", 126], ["Signals"], ["Articles", 10], ["Code Base"], ["Experts"], ["Journal"]];

const OrderIcon = () => (
  <svg width="15" height="16" viewBox="0 0 15 16" aria-hidden="true">
    <path d="M1.500 1.500h7l3 3v10h-10z" fill="#fff" stroke="#8a8a8a" />
    <path d="M8.500 1.500v3h3" fill="none" stroke="#8a8a8a" />
    <circle cx="10.5" cy="11.5" r="3.5" fill="#2a9fe0" stroke="#1670a8" />
  </svg>
);

const iconTool = (name, label, on) => (
  <Tool key={name} $on={on} aria-label={label || name}>
    {ICONS[name]}
  </Tool>
);

export default function App() {
  return (
    <Shell>
      <Global />
      <TitleBar>
        <svg width="14" height="16" viewBox="0 0 14 16" aria-hidden="true">
          <path d="M13 3C10 0 1 1 1.500 8S10 16 13 13" fill="none" stroke="#f58a1f" strokeWidth="2" />
        </svg>
        <AppTitle>5191918: Coinexx-Demo - Coinexx Ltd - USOUSD,M1</AppTitle>
        <Caption>
          <CaptionButton aria-label="Minimize">
            <svg width="12" height="12"><path d="M1 6.500h10" stroke="#000" /></svg>
          </CaptionButton>
          <CaptionButton aria-label="Restore">
            <svg width="12" height="12" fill="none" stroke="#000">
              <rect x="1.5" y="3.5" width="7" height="7" rx="1" />
              <path d="M3.500 1.500h5a2 2 0 0 1 2 2v5" />
            </svg>
          </CaptionButton>
          <CaptionButton aria-label="Close">
            <svg width="12" height="12"><path d="M1 1l10 10M11 1L1 11" stroke="#000" /></svg>
          </CaptionButton>
        </Caption>
      </TitleBar>
      <MenuBar>
        {["File", "View", "Insert", "Charts", "Tools", "Window", "Help"].map((m) => <MenuItem key={m}>{m}</MenuItem>)}
      </MenuBar>
      <ToolArea>
        <ToolRows>
          <Bar $line>
            <DropTool aria-label="New chart">{ICONS.newChart}</DropTool>
            <DropTool aria-label="Profiles">{ICONS.profiles}</DropTool>
            <Sep $wide />
            {iconTool("market", "Market Watch", true)}
            {iconTool("target", "Crosshair")}
            {iconTool("favorites", "Navigator", true)}
            {iconTool("data", "Terminal", true)}
            {iconTool("tester", "Strategy Tester")}
            <Sep $wide />
            <Tool $text>{ICONS.order}New Order</Tool>
            {iconTool("book")}
            {iconTool("signal")}
            {iconTool("radio")}
            <Tool $text $on>{ICONS.auto}AutoTrading</Tool>
            <Sep $wide />
            {iconTool("bars", "Bar chart", true)}
            {iconTool("candle", "Candlesticks")}
            {iconTool("line", "Line chart")}
            <Sep />
            {iconTool("zoomIn", "Zoom in")}
            {iconTool("zoomOut", "Zoom out")}
            {iconTool("tile", "Tile windows")}
            <Sep $wide />
            {iconTool("scroll", "Auto scroll")}
            {iconTool("shift", "Chart shift", true)}
            <Sep />
            <DropTool aria-label="Indicators">{ICONS.indicators}</DropTool>
            <DropTool aria-label="Periods">{ICONS.clock}</DropTool>
            <DropTool aria-label="Templates">{ICONS.template}</DropTool>
          </Bar>
          <Bar>
            {iconTool("cursor", "Cursor", true)}
            {iconTool("cross", "Crosshair")}
            <Sep $wide />
            {["vline", "hline", "trend", "channel", "fibo"].map((n) => iconTool(n))}
            <Tool aria-label="Text"><b>A</b></Tool>
            {iconTool("label", "Text label")}
            <DropTool aria-label="Arrows">{ICONS.arrows}</DropTool>
            <Sep $wide />
            {["M1", "M5", "M15", "M30", "H1", "H4", "D1", "W1", "MN"].map((t) => (
              <Tool key={t} $small $on={t === "M1"}>{t}</Tool>
            ))}
          </Bar>
        </ToolRows>
        <Alerts>
          <Tool aria-label="Search">
            <svg width="16" height="16" viewBox="0 0 16 16">
              <circle cx="10" cy="5.5" r="4" fill="#eaf2ff" stroke="#4a7fd8" strokeWidth="1.8" />
              <path d="M7 8.500L2.500 13" stroke="#3a64b8" strokeWidth="2.6" strokeLinecap="round" />
            </svg>
          </Tool>
          <svg width="24" height="22" viewBox="0 0 24 22" role="img" aria-label="1 message">
            <path d="M2 13c0-5 12-5 12 0s-6 4-8 4l-2 3v-4c-1-1-2-2-2-3z" fill="#f4f4f4" stroke="#a4a4a4" />
            <circle cx="15" cy="9" r="8" fill="#e23c24" />
            <text x="15" y="13" textAnchor="middle" fill="#fff" fontSize="11">1</text>
          </svg>
        </Alerts>
      </ToolArea>

      <Work>
        <Side>
          <PanelHead>
            <PanelTitle>Market Watch: 21:03:39</PanelTitle>
            <CloseX aria-label="Close Market Watch">x</CloseX>
          </PanelHead>
          <PanelBody>
            <PanelContent $room>
              <QuoteTable>
                <colgroup>
                  <col width="61" /><col width="41" /><col width="40" /><col width="20" />
                </colgroup>
                <thead>
                  <tr><th>Symbol</th><th>Bid</th><th>Ask</th><th>!</th></tr>
                </thead>
                <tbody>
                  {QUOTES.map(([s, dir, bid, ask, sp, tint], i) => (
                    <QuoteRow key={i} $up={dir === "u"} $tint={tint}>
                      <td><SymbolCell><Arrow up={dir === "u"} />{s}</SymbolCell></td>
                      <td>{bid}</td><td>{ask}</td><td>{sp}</td>
                    </QuoteRow>
                  ))}
                </tbody>
              </QuoteTable>
            </PanelContent>
            <Track $from={19}><Thumb $size={69} /></Track>
          </PanelBody>
          <PanelTabs $h={28}>
            <PanelTab $on>Symbols</PanelTab>
            <PanelTab>Tick Chart</PanelTab>
          </PanelTabs>
          <PanelHead>
            <PanelTitle>Navigator</PanelTitle>
            <CloseX aria-label="Close Navigator">x</CloseX>
          </PanelHead>
          <PanelBody $grow>
            <PanelContent>
              <Tree>
                {TREE.map(([name, kind, sign, deep], i) => (
                  <TreeRow key={name}>
                    <TreeLead>
                      <Branch sign={sign} deep={deep} last={i === TREE.length - 1} />
                      <TreeIcon kind={kind} />
                    </TreeLead>
                    {name}
                  </TreeRow>
                ))}
              </Tree>
            </PanelContent>
            <Track $from={107}><Thumb $size={313} /></Track>
          </PanelBody>
          <PanelTabs $h={29}>
            <PanelTab $on>Common</PanelTab>
            <PanelTab>Favorites</PanelTab>
          </PanelTabs>
        </Side>

        <Desk>
          <Mdi>
            <Windows>
              <ChartWindow title="USOUSD,M1" active><ChartM1 /></ChartWindow>
              <ChartWindow title="USOUSD,M2 (offline)"><ChartM2 /></ChartWindow>
            </Windows>
            <MinRow>
              {MINIMIZED.map((t) => (
                <MinWin key={t}>
                  <ChartIcon />
                  <WinTitle>{t}</WinTitle>
                  <WinControls kinds={["restore", "max", "close"]} />
                </MinWin>
              ))}
            </MinRow>
          </Mdi>
          <ChartTabs>
            {CHART_TABS.map((t) => <ChartTab key={t} $on={t === "USOUSD,M1"}>{t}</ChartTab>)}
            <TabScroll>
              <svg width="6" height="8"><path d="M5 0v8L1 4z" fill="#888" /></svg>
              <svg width="6" height="8"><path d="M1 0v8l4-4z" fill="#888" /></svg>
            </TabScroll>
          </ChartTabs>
        </Desk>
      </Work>

      <Terminal>
        <Strip>
          <CloseX aria-label="Close Terminal">x</CloseX>
          <StripLabel>Terminal</StripLabel>
        </Strip>
        <TermMain>
          <TermBody>
            <OrderTable>
              <colgroup>{COLS.map(([, w], i) => <col key={i} width={w} />)}</colgroup>
              <thead>
                <tr>{COLS.map(([c], i) => <th key={i} scope="col">{c}</th>)}</tr>
              </thead>
              <tbody>
                {ORDERS.map((row) => (
                  <tr key={row[0]}>
                    {row.map((v, i) => <td key={i}>{i === 0 ? <OrderCell><OrderIcon />{v}</OrderCell> : v}</td>)}
                  </tr>
                ))}
              </tbody>
              <tfoot>
                <tr>
                  <td colSpan="12">
                    <OrderCell>
                      <svg width="15" height="10" viewBox="0 0 15 10" aria-hidden="true">
                        <circle cx="8" cy="5" r="3" fill="none" stroke="#888" />
                        <path d="M5 9l6-8" stroke="#888" />
                      </svg>
                      {"Profit/Loss: 560.18  Credit: 0.00  Deposit: 5 000.00  Withdrawal: 0.00"}
                    </OrderCell>
                  </td>
                  <td>5 560.18</td>
                </tr>
              </tfoot>
            </OrderTable>
            <Track $from={61}><Thumb $size={21} /></Track>
          </TermBody>
          <TermTabs>
            {TERM_TABS.map(([t, n]) => (
              <TermTab key={t} $on={t === "Account History"}>{t}{n && <Count>{n}</Count>}</TermTab>
            ))}
          </TermTabs>
        </TermMain>
      </Terminal>

      <Status>
        <StatusCell $plain>For Help, press F1</StatusCell>
        <StatusCell>Default</StatusCell>
        <StatusCell /><StatusCell /><StatusCell /><StatusCell /><StatusCell /><StatusCell />
        <StatusCell>
          <svg width="24" height="14" viewBox="0 0 24 14" aria-hidden="true">
            <path d="M0 0h23L0 10z" fill="#6a8c1c" />
            <path d="M23 1v13H0v-2z" fill="#a8321c" />
            <path d="M3 0v14M6 0v14M9 0v14M12 0v14M15 0v14M18 0v14M21 0v14" stroke="#f0f0f0" strokeWidth="0.6" />
          </svg>
          26379/5 kb
        </StatusCell>
      </Status>
    </Shell>
  );
}
